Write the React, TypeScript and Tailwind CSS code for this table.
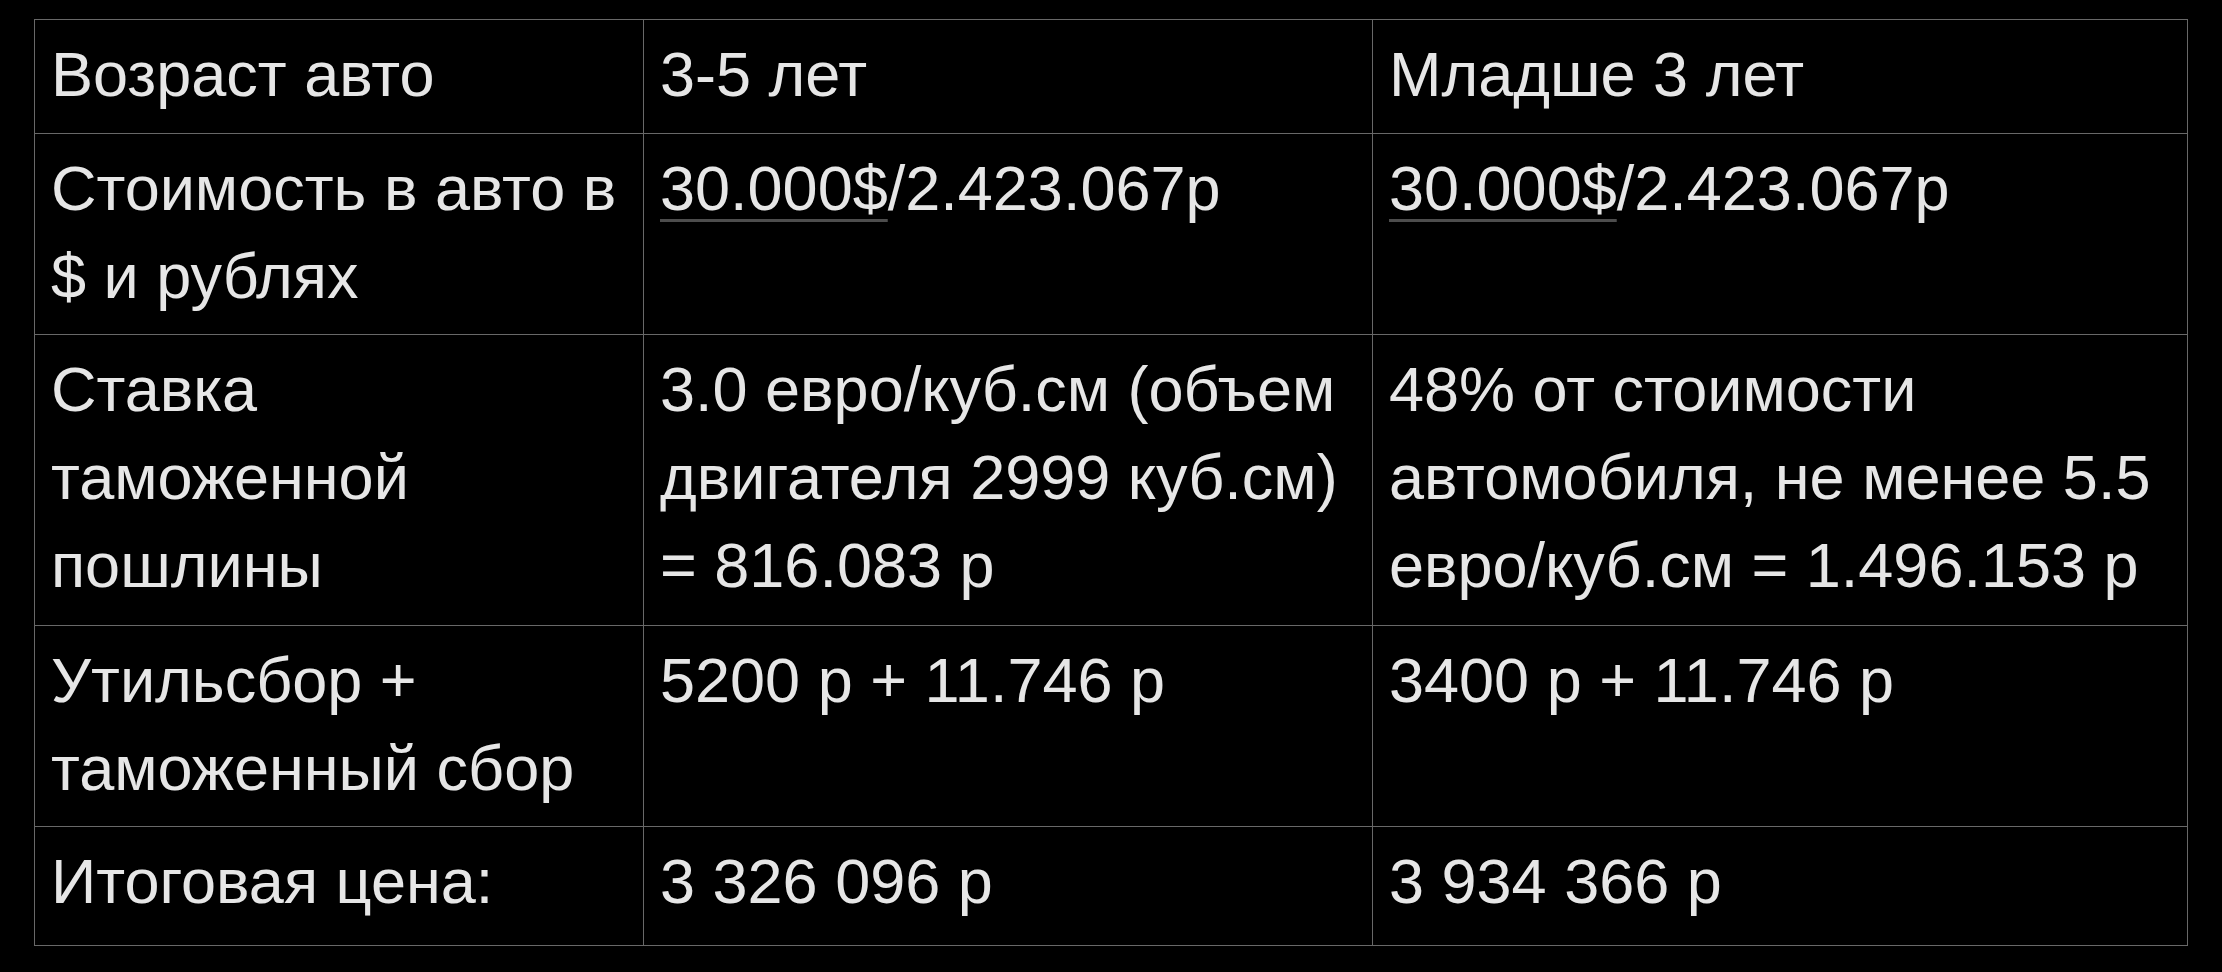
import React from "react";

const cell = "bg-black pl-[16px] pr-2 pt-[10px] whitespace-nowrap";

export default function App() {
  return (
    <div className="w-[2222px] h-[972px] bg-black overflow-hidden pt-[19px] pl-[34px]" style={{ fontFamily: '"Liberation Sans", Arial, sans-serif' }}>
      <div className="grid grid-cols-[608px_728px_814px] grid-rows-[113px_200px_290px_200px_118px] gap-px p-px bg-[#686868] w-fit text-[63px] leading-[88px] text-[#e6e6e6]">
        <div className={cell}>Возраст авто</div>
        <div className={cell}>3-5 лет</div>
        <div className={cell}>Младше 3 лет</div>

        <div className={cell}>Стоимость в авто в<br />$ и рублях</div>
        <div className={cell}>
          <span className="underline decoration-[#4d4d4d] decoration-[3px] underline-offset-[9px]">30.000$</span>/2.423.067р
        </div>
        <div className={cell}>
          <span className="underline decoration-[#4d4d4d] decoration-[3px] underline-offset-[9px]">30.000$</span>/2.423.067р
        </div>

        <div className={cell}>Ставка<br />таможенной<br />пошлины</div>
        <div className={cell}>3.0 евро/куб.см (объем<br />двигателя 2999 куб.см)<br />= 816.083 р</div>
        <div className={cell}>48% от стоимости<br />автомобиля, не менее 5.5<br />евро/куб.см = 1.496.153 р</div>

        <div className={cell}>Утильсбор +<br />таможенный сбор</div>
        <div className={cell}>5200 р + 11.746 р</div>
        <div className={cell}>3400 р + 11.746 р</div>

        <div className={cell}>Итоговая цена:</div>
        <div className={cell}>3 326 096 р</div>
        <div className={cell}>3 934 366 р</div>
      </div>
    </div>
  );
}
